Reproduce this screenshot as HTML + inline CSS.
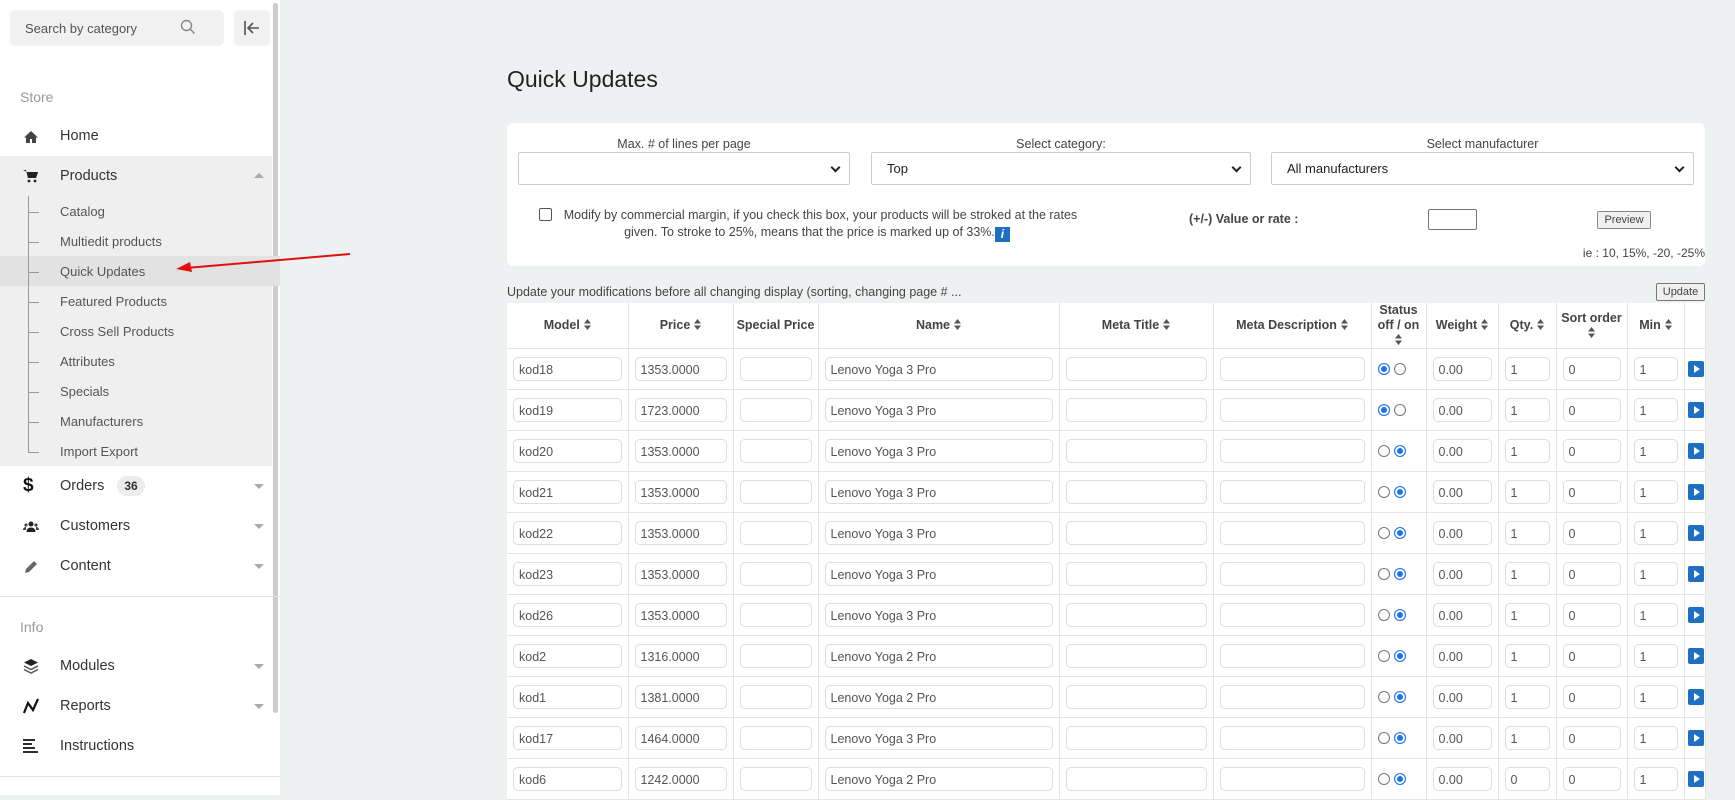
<!DOCTYPE html>
<html><head><meta charset="utf-8">
<style>
*{box-sizing:border-box;margin:0;padding:0}
body{width:1735px;height:795px;overflow:hidden;background:#eef1f2;font-family:"Liberation Sans",sans-serif;color:#333;position:relative}
#sb{position:absolute;left:0;top:0;width:280px;height:795px;background:#fff}
.abs{position:absolute}
.search{left:10px;top:10px;width:214px;height:36px;background:#f1f1f1;border-radius:6px;font-size:13px;color:#555;padding:11px 0 0 15px}
.coll{left:234px;top:10px;width:36px;height:36px;background:#f1f1f1;border-radius:6px}
.sec{left:20px;font-size:14px;color:#999}
.mi{left:60px;font-size:14.5px;color:#333}
.si{left:60px;font-size:13px;color:#555}
.ic{left:22px;width:18px;height:18px}
.car{left:254px;width:0;height:0;border-left:5px solid transparent;border-right:5px solid transparent;border-top:5px solid #aaa}
.tick{left:28px;width:11px;height:1px;background:#999}
#main{position:absolute;left:280px;top:0;right:0;bottom:0}
h1{position:absolute;left:227px;top:66px;font-size:23px;font-weight:normal;color:#222}
.panel{position:absolute;left:227px;top:123px;width:1198px;height:143px;background:#fff;border-radius:6px}
.lbl{position:absolute;font-size:12.5px;color:#444;text-align:center}
.sel{position:absolute;top:29px;height:33px;border:1px solid #ccc;border-radius:2px;background:#fff;font-size:13px;padding:8px 0 0 15px;color:#222}
.chev{position:absolute;right:10px;top:11px;width:7px;height:7px;border-right:2px solid #222;border-bottom:2px solid #222;transform:rotate(45deg)}
table{position:absolute;left:227px;top:303px;width:1198px;border-collapse:collapse;table-layout:fixed;background:#fff}
th{height:45px;font-size:12.5px;color:#444;font-weight:bold;border-right:1px solid #e6e6e6;border-bottom:1px solid #e6e6e6;text-align:center;line-height:15px}
td{height:41px;border-right:1px solid #e6e6e6;border-bottom:1px solid #e6e6e6;padding:0 6px;vertical-align:middle}
td .in{height:24px;border:1px solid #ddd;border-radius:5px;font-size:12.5px;color:#555;padding:5px 0 0 5px;white-space:nowrap;overflow:hidden}
.s{display:inline-block;width:7px;height:11px;vertical-align:-1px;margin-left:4px}
.r{display:inline-block;width:12px;height:12px;border-radius:50%;border:1px solid #777;margin:0 2px;vertical-align:middle}
.r.on{border:1px solid #1a73e8;background:#1a73e8;box-shadow:inset 0 0 0 2px #fff}
.pl{width:16px;height:16px;background:#1e6fc2;border-radius:2px;position:relative;margin-left:-3px}
.pl:after{content:"";position:absolute;left:6px;top:4px;border-left:6px solid #fff;border-top:4px solid transparent;border-bottom:4px solid transparent}
</style></head><body>
<div id="sb">
 <div class="abs search">Search by category
  <svg class="abs" style="left:170px;top:9px" width="16" height="16" viewBox="0 0 16 16"><circle cx="6.5" cy="6.5" r="5" fill="none" stroke="#888" stroke-width="1.4"/><path d="M10 10l4.5 4.5" stroke="#888" stroke-width="1.4"/></svg></div>
 <div class="abs coll"><svg class="abs" style="left:9px;top:10px" width="18" height="16" viewBox="0 0 18 16"><path d="M2 1v14M16 8H5M10 3L5 8l5 5" fill="none" stroke="#555" stroke-width="1.6"/></svg></div>
 <div class="abs" style="left:273px;top:3px;width:5px;height:710px;background:#ccc;border-radius:3px"></div>
 <div class="abs sec" style="top:89px">Store</div>
 <svg class="abs ic" style="top:128px" viewBox="0 0 18 18"><path d="M9 3L2 9.5h2V15h4v-4h2v4h4V9.5h2z" fill="#444"/></svg>
 <div class="abs mi" style="top:128px">Home</div>
 <div class="abs" style="left:0;top:156px;width:272px;height:310px;background:#efefef"></div>
 <div class="abs" style="left:0;top:256px;width:280px;height:30px;background:#e2e2e2"></div>
 <svg class="abs ic" style="top:167px" viewBox="0 0 18 18"><path d="M1 3h3l2 8h8l2-6H5" fill="#222"/><path d="M5 5h11l-2 6H6z" fill="#222"/><circle cx="7" cy="14" r="1.4" fill="#222"/><circle cx="13" cy="14" r="1.4" fill="#222"/></svg>
 <div class="abs mi" style="top:168px">Products</div>
 <div class="abs" style="left:254px;top:173px;border-left:5px solid transparent;border-right:5px solid transparent;border-bottom:5px solid #aaa"></div>
 <div class="abs" style="left:28px;top:196px;width:1px;height:257px;background:#999"></div>
 <div class="abs tick" style="top:212px"></div><div class="abs si" style="top:204px">Catalog</div>
 <div class="abs tick" style="top:242px"></div><div class="abs si" style="top:234px">Multiedit products</div>
 <div class="abs tick" style="top:272px"></div><div class="abs si" style="top:264px">Quick Updates</div>
 <div class="abs tick" style="top:302px"></div><div class="abs si" style="top:294px">Featured Products</div>
 <div class="abs tick" style="top:332px"></div><div class="abs si" style="top:324px">Cross Sell Products</div>
 <div class="abs tick" style="top:362px"></div><div class="abs si" style="top:354px">Attributes</div>
 <div class="abs tick" style="top:392px"></div><div class="abs si" style="top:384px">Specials</div>
 <div class="abs tick" style="top:422px"></div><div class="abs si" style="top:414px">Manufacturers</div>
 <div class="abs tick" style="top:452px"></div><div class="abs si" style="top:444px">Import Export</div>
 <div class="abs" style="left:23px;top:475px;font-size:19px;font-weight:bold;color:#111">$</div>
 <div class="abs mi" style="top:478px">Orders</div>
 <div class="abs" style="left:117px;top:476px;width:28px;height:20px;border-radius:10px;background:#ececec;font-size:12px;font-weight:bold;text-align:center;padding-top:3px">36</div>
 <div class="abs car" style="top:484px"></div>
 <svg class="abs ic" style="top:518px" viewBox="0 0 18 18"><circle cx="9" cy="6" r="2.5" fill="#222"/><path d="M4.5 14c0-3 2-4.5 4.5-4.5s4.5 1.5 4.5 4.5z" fill="#222"/><circle cx="4" cy="7" r="1.6" fill="#444"/><circle cx="14" cy="7" r="1.6" fill="#444"/><path d="M1 12c0-2 1.2-3 3-3v3zM17 12c0-2-1.2-3-3-3v3z" fill="#444"/></svg>
 <div class="abs mi" style="top:518px">Customers</div><div class="abs car" style="top:524px"></div>
 <svg class="abs ic" style="top:558px" viewBox="0 0 18 18"><path d="M3 15l1-4 8-8 3 3-8 8z" fill="#666"/></svg>
 <div class="abs mi" style="top:558px">Content</div><div class="abs car" style="top:564px"></div>
 <div class="abs" style="left:0;top:596px;width:280px;height:1px;background:#e4e4e4"></div>
 <div class="abs sec" style="top:619px">Info</div>
 <svg class="abs ic" style="top:657px" viewBox="0 0 18 18"><path d="M9 2l7 3.5L9 9 2 5.5z" fill="#222"/><path d="M2 9l7 3.5L16 9M2 12.5L9 16l7-3.5" fill="none" stroke="#555" stroke-width="1.5"/></svg>
 <div class="abs mi" style="top:658px">Modules</div><div class="abs car" style="top:664px"></div>
 <svg class="abs ic" style="top:697px" viewBox="0 0 18 18"><path d="M2 16L6 6l5 7 5-11" fill="none" stroke="#111" stroke-width="2.2"/></svg>
 <div class="abs mi" style="top:698px">Reports</div><div class="abs car" style="top:704px"></div>
 <svg class="abs ic" style="top:737px" viewBox="0 0 18 18"><path d="M1 3h12M1 7h9M1 11h12M1 15h15" stroke="#111" stroke-width="1.8"/></svg>
 <div class="abs mi" style="top:738px">Instructions</div>
 <div class="abs" style="left:0;top:776px;width:280px;height:1px;background:#e4e4e4"></div>
</div>
<svg class="abs" style="left:170px;top:245px" width="190" height="32" viewBox="0 0 190 32"><path d="M180 9L16 23" stroke="#e01010" stroke-width="2"/><path d="M6 24l14-7 2 10z" fill="#e01010"/></svg>
<div id="main">
 <h1>Quick Updates</h1>
 <div class="panel">
  <div class="lbl" style="left:11px;top:14px;width:332px">Max. # of lines per page</div>
  <div class="lbl" style="left:364px;top:14px;width:380px">Select category:</div>
  <div class="lbl" style="left:764px;top:14px;width:423px">Select manufacturer</div>
  <div class="sel" style="left:11px;width:332px"><span class="chev"></span></div>
  <div class="sel" style="left:364px;width:380px">Top<span class="chev"></span></div>
  <div class="sel" style="left:764px;width:423px">All manufacturers<span class="chev"></span></div>
  <div class="abs" style="left:32px;top:85px;width:13px;height:13px;border:1px solid #555;border-radius:2px"></div>
  <div class="lbl" style="left:40px;top:84px;width:540px;line-height:17px;font-size:12.5px">&nbsp;&nbsp;Modify by commercial margin, if you check this box, your products will be stroked at the rates given. To stroke to 25%, means that the price is marked up of 33%.<span style="display:inline-block;width:15px;height:15px;background:#1e6fc2;color:#fff;font-style:italic;font-weight:bold;font-size:12px;vertical-align:-2px;line-height:15px">i</span></div>
  <div class="abs" style="left:682px;top:89px;font-size:12.5px;font-weight:bold;color:#444">(+/-) Value or rate :</div>
  <div class="abs" style="left:921px;top:86px;width:49px;height:21px;border:1px solid #777;border-radius:2px"></div>
  <div class="abs" style="left:1090px;top:88px;width:54px;height:18px;border:1px solid #888;border-radius:2px;background:#f0f0f0;font-size:11px;color:#444;text-align:center;padding-top:2px">Preview</div>
  <div class="abs" style="right:0;top:123px;font-size:12px;color:#444">ie : 10, 15%, -20, -25%</div>
 </div>
 <div class="abs" style="left:227px;top:285px;font-size:12.5px;color:#444">Update your modifications before all changing display (sorting, changing page # ...</div>
 <div class="abs" style="left:1376px;top:283px;width:49px;height:18px;border:1px solid #777;border-radius:2px;background:#f0f0f0;font-size:11px;color:#444;text-align:center;padding-top:2px">Update</div>
 <table>
  <colgroup><col style="width:121px"><col style="width:105px"><col style="width:85px"><col style="width:241px"><col style="width:154px"><col style="width:158px"><col style="width:55px"><col style="width:72px"><col style="width:58px"><col style="width:71px"><col style="width:57px"><col style="width:21px"></colgroup>
  <tr>
   <th>Model<svg class="s" viewBox="0 0 7 11"><path d="M0 4.5L3.5 0 7 4.5zM0 6.5L3.5 11 7 6.5z" fill="#555"/></svg></th>
   <th>Price<svg class="s" viewBox="0 0 7 11"><path d="M0 4.5L3.5 0 7 4.5zM0 6.5L3.5 11 7 6.5z" fill="#555"/></svg></th>
   <th>Special Price</th>
   <th>Name<svg class="s" viewBox="0 0 7 11"><path d="M0 4.5L3.5 0 7 4.5zM0 6.5L3.5 11 7 6.5z" fill="#555"/></svg></th>
   <th>Meta Title<svg class="s" viewBox="0 0 7 11"><path d="M0 4.5L3.5 0 7 4.5zM0 6.5L3.5 11 7 6.5z" fill="#555"/></svg></th>
   <th>Meta Description<svg class="s" viewBox="0 0 7 11"><path d="M0 4.5L3.5 0 7 4.5zM0 6.5L3.5 11 7 6.5z" fill="#555"/></svg></th>
   <th>Status<br>off / on<br><svg class="s" style="margin:0" viewBox="0 0 7 11"><path d="M0 4.5L3.5 0 7 4.5zM0 6.5L3.5 11 7 6.5z" fill="#555"/></svg></th>
   <th>Weight<svg class="s" viewBox="0 0 7 11"><path d="M0 4.5L3.5 0 7 4.5zM0 6.5L3.5 11 7 6.5z" fill="#555"/></svg></th>
   <th>Qty.<svg class="s" viewBox="0 0 7 11"><path d="M0 4.5L3.5 0 7 4.5zM0 6.5L3.5 11 7 6.5z" fill="#555"/></svg></th>
   <th>Sort order<br><svg class="s" style="margin:0" viewBox="0 0 7 11"><path d="M0 4.5L3.5 0 7 4.5zM0 6.5L3.5 11 7 6.5z" fill="#555"/></svg></th>
   <th>Min<svg class="s" viewBox="0 0 7 11"><path d="M0 4.5L3.5 0 7 4.5zM0 6.5L3.5 11 7 6.5z" fill="#555"/></svg></th>
   <th></th>
  </tr>
  <tr><td><div class="in">kod18</div></td><td><div class="in">1353.0000</div></td><td><div class="in"></div></td><td><div class="in">Lenovo Yoga 3 Pro</div></td><td><div class="in"></div></td><td><div class="in"></div></td><td style="padding:0 4px"><span class="r on"></span><span class="r"></span></td><td><div class="in">0.00</div></td><td><div class="in">1</div></td><td><div class="in">0</div></td><td><div class="in">1</div></td><td><div class="pl"></div></td></tr>
  <tr><td><div class="in">kod19</div></td><td><div class="in">1723.0000</div></td><td><div class="in"></div></td><td><div class="in">Lenovo Yoga 3 Pro</div></td><td><div class="in"></div></td><td><div class="in"></div></td><td style="padding:0 4px"><span class="r on"></span><span class="r"></span></td><td><div class="in">0.00</div></td><td><div class="in">1</div></td><td><div class="in">0</div></td><td><div class="in">1</div></td><td><div class="pl"></div></td></tr>
  <tr><td><div class="in">kod20</div></td><td><div class="in">1353.0000</div></td><td><div class="in"></div></td><td><div class="in">Lenovo Yoga 3 Pro</div></td><td><div class="in"></div></td><td><div class="in"></div></td><td style="padding:0 4px"><span class="r"></span><span class="r on"></span></td><td><div class="in">0.00</div></td><td><div class="in">1</div></td><td><div class="in">0</div></td><td><div class="in">1</div></td><td><div class="pl"></div></td></tr>
  <tr><td><div class="in">kod21</div></td><td><div class="in">1353.0000</div></td><td><div class="in"></div></td><td><div class="in">Lenovo Yoga 3 Pro</div></td><td><div class="in"></div></td><td><div class="in"></div></td><td style="padding:0 4px"><span class="r"></span><span class="r on"></span></td><td><div class="in">0.00</div></td><td><div class="in">1</div></td><td><div class="in">0</div></td><td><div class="in">1</div></td><td><div class="pl"></div></td></tr>
  <tr><td><div class="in">kod22</div></td><td><div class="in">1353.0000</div></td><td><div class="in"></div></td><td><div class="in">Lenovo Yoga 3 Pro</div></td><td><div class="in"></div></td><td><div class="in"></div></td><td style="padding:0 4px"><span class="r"></span><span class="r on"></span></td><td><div class="in">0.00</div></td><td><div class="in">1</div></td><td><div class="in">0</div></td><td><div class="in">1</div></td><td><div class="pl"></div></td></tr>
  <tr><td><div class="in">kod23</div></td><td><div class="in">1353.0000</div></td><td><div class="in"></div></td><td><div class="in">Lenovo Yoga 3 Pro</div></td><td><div class="in"></div></td><td><div class="in"></div></td><td style="padding:0 4px"><span class="r"></span><span class="r on"></span></td><td><div class="in">0.00</div></td><td><div class="in">1</div></td><td><div class="in">0</div></td><td><div class="in">1</div></td><td><div class="pl"></div></td></tr>
  <tr><td><div class="in">kod26</div></td><td><div class="in">1353.0000</div></td><td><div class="in"></div></td><td><div class="in">Lenovo Yoga 3 Pro</div></td><td><div class="in"></div></td><td><div class="in"></div></td><td style="padding:0 4px"><span class="r"></span><span class="r on"></span></td><td><div class="in">0.00</div></td><td><div class="in">1</div></td><td><div class="in">0</div></td><td><div class="in">1</div></td><td><div class="pl"></div></td></tr>
  <tr><td><div class="in">kod2</div></td><td><div class="in">1316.0000</div></td><td><div class="in"></div></td><td><div class="in">Lenovo Yoga 2 Pro</div></td><td><div class="in"></div></td><td><div class="in"></div></td><td style="padding:0 4px"><span class="r"></span><span class="r on"></span></td><td><div class="in">0.00</div></td><td><div class="in">1</div></td><td><div class="in">0</div></td><td><div class="in">1</div></td><td><div class="pl"></div></td></tr>
  <tr><td><div class="in">kod1</div></td><td><div class="in">1381.0000</div></td><td><div class="in"></div></td><td><div class="in">Lenovo Yoga 2 Pro</div></td><td><div class="in"></div></td><td><div class="in"></div></td><td style="padding:0 4px"><span class="r"></span><span class="r on"></span></td><td><div class="in">0.00</div></td><td><div class="in">1</div></td><td><div class="in">0</div></td><td><div class="in">1</div></td><td><div class="pl"></div></td></tr>
  <tr><td><div class="in">kod17</div></td><td><div class="in">1464.0000</div></td><td><div class="in"></div></td><td><div class="in">Lenovo Yoga 3 Pro</div></td><td><div class="in"></div></td><td><div class="in"></div></td><td style="padding:0 4px"><span class="r"></span><span class="r on"></span></td><td><div class="in">0.00</div></td><td><div class="in">1</div></td><td><div class="in">0</div></td><td><div class="in">1</div></td><td><div class="pl"></div></td></tr>
  <tr><td><div class="in">kod6</div></td><td><div class="in">1242.0000</div></td><td><div class="in"></div></td><td><div class="in">Lenovo Yoga 2 Pro</div></td><td><div class="in"></div></td><td><div class="in"></div></td><td style="padding:0 4px"><span class="r"></span><span class="r on"></span></td><td><div class="in">0.00</div></td><td><div class="in">0</div></td><td><div class="in">0</div></td><td><div class="in">1</div></td><td><div class="pl"></div></td></tr>
 </table>
</div>
</body></html>
